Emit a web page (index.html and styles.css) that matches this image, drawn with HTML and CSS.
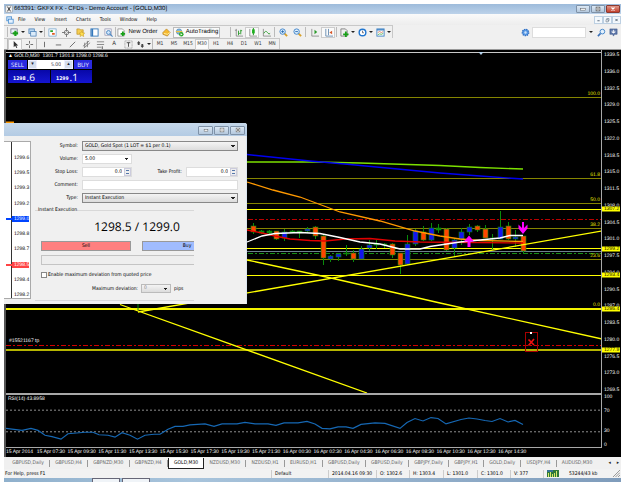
FILE: index.html
```
<!DOCTYPE html>
<html lang="en">
<head>
<meta charset="utf-8">
<title>663391: GKFX FX - CFDs - Demo Account - [GOLD,M30]</title>
<link rel="stylesheet" href="styles.css">
</head>
<body>
<div class="app">
  <header class="title">
    <svg class="ic" viewBox="0 0 10 10"><rect x="1" y="1" width="8" height="8" fill="#f4f4f4" stroke="#888" stroke-width=".6"/><path d="M3 2l4 6M7 2L3 8" stroke="#333" stroke-width="1.2"/></svg>
    <span class="grow">663391: GKFX FX - CFDs - Demo Account - [GOLD,M30]</span>
    <button class="win" aria-label="Minimize"><svg viewBox="0 0 10 8"><rect x="2" y="3.5" width="6" height="2" fill="#fff" stroke="#555" stroke-width=".6"/></svg></button>
    <button class="win" aria-label="Maximize"><svg viewBox="0 0 10 8"><rect x="2.5" y="1.5" width="5" height="5" fill="#fff" stroke="#555"/><rect x="4" y="3" width="2" height="2" fill="#777"/></svg></button>
    <button class="win close" aria-label="Close"><svg viewBox="0 0 10 8"><path d="M3 2l4 4M7 2L3 6" stroke="#fff" stroke-width="1.5"/></svg></button>
  </header>
  <nav class="menu">
    <svg class="ic" viewBox="0 0 10 10"><rect x="1" y="1" width="6" height="5" fill="#cde4fa" stroke="#4b8fd0"/><rect x="3" y="4" width="6" height="5" fill="#e5f2ff" stroke="#4b8fd0"/></svg>
    <a href="#">File</a><a href="#">View</a><a href="#">Insert</a><a href="#">Charts</a><a href="#">Tools</a><a href="#">Window</a><a href="#">Help</a>
    <span class="grow"></span>
    <button class="mdi" aria-label="Minimize chart"><svg viewBox="0 0 8 8"><path d="M2.500 5h3" stroke="#345" stroke-width="1"/></svg></button>
    <button class="mdi" aria-label="Restore chart"><svg viewBox="0 0 8 8"><path d="M3 3V2h3v3H5M2 3.500h3v3H2z" fill="none" stroke="#567" stroke-width=".7"/></svg></button>
    <button class="mdi" aria-label="Close chart"><svg viewBox="0 0 8 8"><path d="M2.500 2.500l3 3M5.500 2.500l-3 3" stroke="#345" stroke-width="1"/></svg></button>
  </nav>
  <div class="bar one">
    <div class="tools">
      <i class="grip"></i>
      <button class="dd" aria-label="New chart"><svg viewBox="0 0 10 10"><rect x="1" y="1" width="7" height="5" fill="#e8f0f5" stroke="#557" stroke-width=".7"/><path d="M6 3v6M3 6h6" stroke="#18a018" stroke-width="2.400"/></svg></button>
      <button class="dd" aria-label="Profiles"><svg viewBox="0 0 10 10"><rect x="1" y="1" width="6" height="5" fill="#b8d6f0" stroke="#4179b0" stroke-width=".8"/><rect x="3" y="4" width="6" height="5" fill="#dcecfa" stroke="#4179b0" stroke-width=".8"/></svg></button>
      <i class="sep"></i>
      <button aria-label="Market watch"><svg viewBox="0 0 10 10"><rect x="1" y="1" width="8" height="8" fill="#fff" stroke="#6aa0cc" stroke-width=".8"/><path d="M2.500 3.500h3" stroke="#2aa52a" stroke-width="2"/><path d="M4.500 6.500h3" stroke="#e05a20" stroke-width="2"/></svg></button>
      <button aria-label="Data window"><svg viewBox="0 0 10 10"><circle cx="5" cy="5" r="2.500" fill="none" stroke="#777"/><path d="M5 0v4M5 6v4M0 5h4M6 5h4" stroke="#666" stroke-width=".9"/></svg></button>
      <button aria-label="Navigator"><svg viewBox="0 0 10 10"><path d="M1 1h3l1 1h3v5H1z" fill="#f5cd52" stroke="#b98c1c" stroke-width=".7"/><path d="M6.500 3.500l1 2 2.200.2-1.600 1.500.5 2.300-2.100-1.200-2 1.200.5-2.300L3.500 5.700l2-.2z" fill="#ffdf50" stroke="#c79a20" stroke-width=".6"/></svg></button>
      <button aria-label="Terminal"><svg viewBox="0 0 10 10"><rect x="1" y="1" width="8" height="8" fill="#fff" stroke="#3478bb"/><path d="M2.500 1v8" stroke="#3478bb" stroke-width="2"/></svg></button>
      <button aria-label="Strategy tester"><svg viewBox="0 0 10 10"><rect x="1" y="1" width="7" height="7" fill="#f7f7f7" stroke="#88a" stroke-width=".7"/><circle cx="5" cy="5" r="2.200" fill="#cde4fa" stroke="#4a86c0"/><path d="M6.500 6.500L9.500 9.500" stroke="#4a86c0" stroke-width="1.200"/></svg></button>
      <i class="sep"></i>
      <button class="wide order"><svg viewBox="0 0 10 10"><path d="M1 1h5l2 2v6H1z" fill="#fff" stroke="#777" stroke-width=".7"/><path d="M6.500 4v5M4 6.500h5" stroke="#18a018" stroke-width="2"/></svg>New Order</button>
      <button aria-label="MetaEditor"><svg viewBox="0 0 10 10"><path d="M1 5l4-4 4 4-3 4-5-2z" fill="#f6b92e" stroke="#b07714" stroke-width=".7"/><path d="M2 6l4 1 3-2" fill="none" stroke="#fff0a8"/></svg></button>
      <button class="wide auto"><svg viewBox="0 0 10 10"><circle cx="4.500" cy="4" r="3" fill="#7dbbe8" stroke="#2d6ca8" stroke-width=".6"/><path d="M1 4h7" stroke="#f0c040" stroke-width="1.500"/><circle cx="7" cy="7" r="2.500" fill="#28a828"/><path d="M6.200 5.700l2.200 1.300-2.200 1.300z" fill="#fff"/></svg>AutoTrading</button>
      <i class="grip far"></i>
      <button aria-label="Bar chart"><svg viewBox="0 0 10 10"><path d="M2.500 1v8H10M1 2.500h2" fill="none" stroke="#777" stroke-width=".8"/><path d="M5 3v5M7.500 2v5M5 6h1.500M7.500 3H9" stroke="#2a9a2a"/></svg></button>
      <button class="on" aria-label="Candlesticks"><svg viewBox="0 0 10 10"><path d="M2 1v8H10" fill="none" stroke="#777" stroke-width=".8"/><path d="M6 0v8" stroke="#178a17"/><rect x="4.500" y="1.500" width="3" height="4.500" fill="#1fb01f"/></svg></button>
      <button aria-label="Line chart"><svg viewBox="0 0 10 10"><path d="M1.500 1v8H10" fill="none" stroke="#777" stroke-width=".8"/><path d="M2 6q2-4 4-1t3 1" fill="none" stroke="#2a9a2a"/></svg></button>
      <i class="sep"></i>
      <button aria-label="Zoom in"><svg viewBox="0 0 10 10"><path d="M6 6l3 3" stroke="#d8a028" stroke-width="2"/><circle cx="4" cy="4" r="3" fill="#dceefc" stroke="#3a80c8"/><path d="M2.500 4h3M4 2.500v3" stroke="#2468b0"/></svg></button>
      <button aria-label="Zoom out"><svg viewBox="0 0 10 10"><path d="M6 6l3 3" stroke="#d8a028" stroke-width="2"/><circle cx="4" cy="4" r="3" fill="#dceefc" stroke="#3a80c8"/><path d="M2.500 4h3" stroke="#2468b0"/></svg></button>
      <i class="sep"></i>
      <button aria-label="Auto scroll"><svg viewBox="0 0 10 10"><path d="M2 1v8H10" fill="none" stroke="#777" stroke-width=".8"/><path d="M5 2v5l3-2.500z" fill="#2a9a2a"/></svg></button>
      <button class="on" aria-label="Chart shift"><svg viewBox="0 0 10 10"><path d="M2 1v8H10M5 1v7" fill="none" stroke="#5580a8" stroke-width=".9"/><path d="M9 3v4L6 5z" fill="#d8572a"/></svg></button>
      <i class="sep"></i>
      <button class="dd" aria-label="Indicators"><svg viewBox="0 0 10 10"><path d="M1 1h5l2 2v6H1z" fill="#eee" stroke="#666" stroke-width=".8"/><path d="M6.500 4v6M3.500 7h6" stroke="#18a018" stroke-width="2"/></svg></button>
      <button class="dd" aria-label="Periods"><svg viewBox="0 0 10 10"><circle cx="5" cy="5" r="3.700" fill="#fff" stroke="#2277d0" stroke-width="1.600"/><path d="M5 3v2.300h1.600" fill="none" stroke="#445" stroke-width=".8"/></svg></button>
      <button class="dd" aria-label="Templates"><svg viewBox="0 0 10 10"><rect x="1" y="1" width="8" height="8" fill="#fff" stroke="#3e82c4"/><path d="M1 2h8" stroke="#3e82c4" stroke-width="1.500"/><path d="M2 5l2-1 2 1 2-1" fill="none" stroke="#d06040" stroke-width=".8"/><path d="M2 7.500l2-1 2 .5 2-1" fill="none" stroke="#30a030" stroke-width=".8"/></svg></button>
    </div>
    <span class="grow"></span>
    <div class="search">
      <button aria-label="Options"><svg viewBox="0 0 10 10"><circle cx="5" cy="5" r="3.500" fill="#5a9be6" stroke="#2f6cc0" stroke-dasharray="1.400 1" stroke-width="1.600"/><circle cx="5" cy="5" r="1.300" fill="#cfe3fa"/></svg></button>
      <input type="text" aria-label="Search"><span class="caret"></span>
      <button aria-label="Find"><svg viewBox="0 0 10 10"><path d="M4 6L1 9" stroke="#3a70b8" stroke-width="1.800"/><circle cx="6" cy="4" r="2.600" fill="#e4f1fd" stroke="#3a80c8"/></svg></button>
      <button aria-label="Chat"><svg viewBox="0 0 10 10"><path d="M1 1h8v6H6L5 9 4 7H1z" fill="#5b75a8" stroke="#3c5588" stroke-width=".6"/><path d="M5 2v4M3.500 3v2h3V3" fill="none" stroke="#fff" stroke-width=".9"/></svg></button>
    </div>
  </div>
  <div class="bar two">
    <div class="tools">
      <i class="grip"></i>
      <button class="on" aria-label="Cursor"><svg viewBox="0 0 10 10"><path d="M3 1v7l1.700-1.600L6 9l1-.5-1.200-2.400H8z" fill="#333"/></svg></button>
      <button aria-label="Crosshair"><svg viewBox="0 0 10 10"><path d="M5 1v3M5 6v3M1 5h3M6 5h3" stroke="#555" stroke-width=".9"/></svg></button>
      <i class="sep"></i>
      <button aria-label="Vertical line"><svg viewBox="0 0 10 10"><path d="M5 2v6" stroke="#555" stroke-width=".9"/></svg></button>
      <button aria-label="Horizontal line"><svg viewBox="0 0 10 10"><path d="M2 5.500h6" stroke="#555" stroke-width=".9"/></svg></button>
      <button aria-label="Trend line"><svg viewBox="0 0 10 10"><path d="M2 8l6-6" stroke="#555" stroke-width=".9"/></svg></button>
      <button aria-label="Channel"><svg viewBox="0 0 10 10"><path d="M1 7l7-6M2 9l7-6M3 3v5M6 1v7" stroke="#666" stroke-width=".8"/></svg></button>
      <button aria-label="Fibonacci"><svg viewBox="0 0 10 10"><path d="M1 2h8M1 5h8M1 8h5" stroke="#777" stroke-width=".9"/><path d="M7 7v3" stroke="#555"/></svg></button>
      <button class="letter">A</button>
      <button aria-label="Text label"><svg viewBox="0 0 10 10"><rect x="1" y="1" width="8" height="8" fill="none" stroke="#888" stroke-dasharray="1 .6" stroke-width=".8"/><path d="M3 3h4M5 3v4.500" stroke="#444"/></svg></button>
      <button class="dd" aria-label="Arrows"><svg viewBox="0 0 10 10"><path d="M3 1l2 2.500H4v2H2v-2H1zM7 9L5 6.500h1v-2h2v2h1z" fill="#444"/></svg></button>
      <i class="sep"></i>
      <button>M1</button><button>M5</button><button>M15</button><button class="on">M30</button><button>H1</button><button>H4</button><button>D1</button><button>W1</button><button>MN</button>
    </div>
  </div>

  <main class="chart">
    <section class="plot">
      <svg class="fill" viewBox="6 50 595 343" preserveAspectRatio="none">
        <g class="flat">
          <path d="M6 52.500H602" stroke="#c8c8c8"/>
          <path d="M6 97.500H602M6 178.500H602M6 203.500H602M6 228.500H602M6 259.500H602" stroke="#858500"/>
          <path d="M6 219.500H602" stroke="#b80000" stroke-dasharray="5 2 2 2"/>
          <path d="M6 253.500H602" stroke="#169016" stroke-dasharray="5 2 2 2"/>
          <path d="M6 251.500H602" stroke="#708090"/>
          <path d="M6 209.500H602M6 248.500H602M6 275.500H602" stroke="#ff0"/>
          <path d="M6 309H602" stroke="#f2f200" stroke-width="2"/>
          <path d="M6 345.500H602" stroke="#d00000" stroke-dasharray="5 2 2 2"/>
          <path d="M6 350H602" stroke="#b5b500" stroke-width="2"/>
        </g>
        <path d="M5 122.500h9" stroke="#f90" stroke-width="2"/>
        <g id="candles"></g>
        <g fill="none">
          <path d="M120 304.500L367 393M138 312L602 231M247 260L331 278L440 303L602 339" stroke="#ff0" stroke-width="1.300"/>
          <path d="M138 304v6" stroke="#0a8a0a"/>
          <path d="M247 162H315L360 163L440 165.500L480 167.500L523 169" stroke="#7ce000" stroke-width="1.300"/>
          <path d="M247 154.500L310 161L350 164.500L440 173L480 176L523 179" stroke="#0000f0" stroke-width="1.400"/>
          <path d="M247 182L273 190L300 197L340 212L380 221L415 231L440 236L460 239L480 240.500L523 241.500" stroke="#f90" stroke-width="1.300"/>
          <path d="M247 230L262 233L275 236L290 239L310 240.500L325 241L345 239L370 238.500L395 241L420 242L523 243" stroke="#e00000" stroke-width="1.300"/>
          <path d="M247 242L262 236L275 233.500L300 232.500L320 233.500L340 237.500L360 242L380 244L400 249L420 249L430 246.500L440 245L460 242L480 240L500 238L510 235.500L523 235.500" stroke="#fff" stroke-width="1.300"/>
        </g>
        <g fill="#f0f">
          <path d="M469 235.500l5 6h-3.500v5.500h-3v-5.500H464z"/>
          <path d="M522 222h2v6l3.500-3.500v4L523 234l-4.500-5.500v-4L522 228z"/>
        </g>
        <rect x="525.500" y="332.500" width="12" height="19" fill="none" stroke="#a80000"/>
        <path d="M528.500 339.500l5.500 5.500M534 339l-5.500 6.500" stroke="#f01010" stroke-width="1.700"/>
        <rect x="530" y="332" width="2" height="2" fill="#fff"/>
        <path d="M478.500 52h5l-2.500 3z" fill="#b8d4ee"/>
      </svg>
      <p class="quote-line">▲ GOLD,M30&nbsp; 1301.7 1301.8 1298.0 1298.6</p>
      <div class="trade">
        <button class="side">SELL</button>
        <div class="vol"><button aria-label="Less">▾</button><input type="text" value="5.00" aria-label="Trade volume"><button aria-label="More">▴</button></div>
        <button class="side">BUY</button>
        <div class="px"><b>1298</b><span>.6</span></div>
        <div class="px"><b>1299</b><span>.1</span></div>
      </div>
      <span class="fib" style="top:13.7%">100.0</span><span class="fib" style="top:37.3%">61.8</span><span class="fib" style="top:44.6%">50.0</span><span class="fib" style="top:51.9%">38.2</span><span class="fib" style="top:60.9%">23.6</span><span class="fib" style="top:75.3%">0.0</span>
      <span class="tp">#15521167 tp</span>
    </section>
    <aside class="prices">
      <span>1339.5</span><span>1336.0</span><span>1332.5</span><span>1329.0</span><span>1325.5</span><span>1322.0</span><span>1318.5</span><span>1315.0</span><span>1311.5</span><span>1308.0</span><span>1304.5</span><span>1301.0</span><span>1297.5</span><span>1294.0</span><span>1290.5</span><span>1287.0</span><span>1283.5</span><span>1280.0</span><span>1276.5</span><span>1273.0</span><span>1269.5</span>
      <b class="tag" style="top:46.4%">1307.2</b><b class="tag" style="top:57.9%">1299.2</b><b class="tag" style="top:65.7%">1293.4</b><b class="tag" style="top:75.5%">1286.4</b><b class="tag" style="top:87.4%">1277.9</b>
    </aside>
    <section class="rsi">
      <svg class="fill" viewBox="6 393 595 55" preserveAspectRatio="none">
        <g class="flat" fill="none"><path d="M6 394H602" stroke="#a8a8a8" stroke-width="2"/><path d="M6 410.500H602M6 432.500H602" stroke="#909090" stroke-dasharray="2 2"/></g>
        <path fill="none" stroke="#1668b4" stroke-width="1.200" d="M6 429L14 430L22 431L31 429L38 431L45 436L52 437.500L61 440L68 434.500L85 433L93 433L99 435.500L108 436L115 438L122 433.500L130 436L137.500 440L145 436L154 435L160 435L168 430L175 427L183 427L190 425.500L205 424.500L214 427L222 424.500L237 424.500L245 423L255 424.500L268 424.500L276 426L284 423.500L298 423.500L307 422L315 424.500L322 429L330 429.500L338 427.500L346 427.500L353 429L361 425L375 423.500L385 424L400 429L407 423L415 419L423 421.500L431 418L438 419L446 424.500L461 420L469 418.500L477 419.500L485 421L492 422L500 419L508 422.500L515 421L523 425"/>
      </svg>
      <p>RSI(14) 43.8958</p>
    </section>
    <aside class="levels"><span>100</span><span>70</span><span>30</span><span>0</span></aside>
    <footer class="times"><div><span>15 Apr 2014</span><span>15 Apr 07:30</span><span>15 Apr 09:30</span><span>15 Apr 11:30</span><span>15 Apr 13:30</span><span>15 Apr 15:30</span><span>15 Apr 17:30</span><span>15 Apr 19:30</span><span>15 Apr 21:30</span><span>16 Apr 00:30</span><span>16 Apr 02:30</span><span>16 Apr 04:30</span><span>16 Apr 06:30</span><span>16 Apr 08:30</span><span>16 Apr 10:30</span><span>16 Apr 12:30</span><span>16 Apr 14:30</span></div></footer>
  </main>

  <nav class="tabs">
    <a href="#">GBPUSD,Daily</a><a href="#">GBPUSD,H4</a><a href="#">GBPNZD,M30</a><a href="#">GBPNZD,H4</a><a href="#" class="active">GOLD,M30</a><a href="#">NZDUSD,M30</a><a href="#">NZDUSD,H1</a><a href="#">EURUSD,H1</a><a href="#">GBPUSD,Daily</a><a href="#">GBPUSD,Daily</a><a href="#">GBPJPY,Daily</a><a href="#">GBPJPY,H1</a><a href="#">GOLD,Daily</a><a href="#">USDJPY,H4</a><a href="#">AUDUSD,M30</a><span class="scroll"><button aria-label="Scroll left">◂</button><button aria-label="Scroll right">▸</button></span>
  </nav>
  <footer class="status">
    <span>For Help, press F1</span><span>Default</span><span>2014.04.16 09:30</span><span>O: 1302.6</span><span>H: 1303.4</span><span>L: 1301.0</span><span>C: 1301.0</span><span>V: 377</span>
    <span class="net"><svg viewBox="0 0 12 7"><rect width="12" height="7" fill="#2f7838"/><path d="M1.500 7V3M3.500 7V2M5.500 7V4M7.500 7V3M9.500 7V1" stroke="#d8e86a"/><path d="M0 1h6" stroke="#3a70b0" stroke-width="1.500"/></svg>53244/43 kb</span>
    <svg class="resize" viewBox="0 0 7 7"><path d="M0 7L7 0M2.500 7L7 2.500M5 7l2-2" stroke="#999"/></svg>
  </footer>
  <div class="taskbar"><i class="orb"></i><i class="task"></i><i class="task"></i></div>
</div>

<form class="dialog">
  <header><button type="button" class="win" aria-label="Minimize order"><svg viewBox="0 0 10 8"><rect x="2.500" y="3.500" width="5" height="2" fill="#fff" stroke="#555" stroke-width=".6"/></svg></button><button type="button" class="win" aria-label="Maximize order"><svg viewBox="0 0 10 8"><rect x="2.500" y="1.500" width="5" height="5" fill="#fff" stroke="#666" stroke-width=".8"/><path d="M4 4h2" stroke="#666"/></svg></button><button type="button" class="win" aria-label="Close order"><svg viewBox="0 0 10 8"><rect x="2.500" y="1.500" width="5" height="5" fill="#fff" stroke="#777" stroke-width=".8"/><path d="M3 2l4 4M7 2L3 6" stroke="#666"/></svg></button></header>
  <div class="order-body">
    <div class="tick">
      <span>1299.6</span><span>1299.5</span><span>1299.3</span><span>1299.2</span><span class="ask">1299.0</span><span>1298.8</span><span>1298.7</span><span class="bid">1298.5</span><span>1298.4</span><span>1298.2</span>
    </div>
    <div class="fields">
      <div class="grid">
        <label for="sym">Symbol:</label><select id="sym" class="span"><option>GOLD, Gold Spot (1 LOT = $1 per 0.1)</option></select>
        <label for="vol">Volume:</label><select id="vol" class="plain"><option>5.00</option></select>
        <label for="sl" class="row3">Stop Loss:</label><span class="spin"><input id="sl" value="0.0"><i></i></span><label for="pr">Take Profit:</label><span class="spin"><input id="pr" value="0.0"><i></i></span>
        <label for="com">Comment:</label><input id="com" class="span">
        <label for="typ">Type:</label><select id="typ" class="span"><option>Instant Execution</option></select>
      </div>
      <fieldset>
        <legend>Instant Execution</legend>
        <div class="quote">1298.5 / 1299.0</div>
        <div class="acts"><button type="button" class="sell">Sell</button><button type="button" class="buy">Buy</button></div>
        <div class="progress"></div>
        <label class="check"><input type="checkbox">Enable maximum deviation from quoted price</label>
        <div class="dev"><label for="dev">Maximum deviation:</label><select id="dev" disabled><option>0</option></select><span>pips</span></div>
      </fieldset>
    </div>
  </div>
</form>
<script src="chart.js"></script>
</body>
</html>
```
FILE: styles.css
```
* { box-sizing: border-box; }
body { margin: 0; background: #fff; font: 5px/8px "DejaVu Sans Condensed", "Open Sans", sans-serif; color: #000; text-rendering: geometricPrecision; }
p { margin: 0; }
a { color: inherit; text-decoration: none; }
button, input, select { font: inherit; color: inherit; margin: 0; padding: 0; border: 0; border-radius: 0; background: none; appearance: none; min-width: 0; text-rendering: inherit; }
svg { display: block; }
.grow { flex: 1; }
.app { min-height: 100vh; padding: 4px 4px 0; display: flex; flex-direction: column; }
.ic { width: 8px; height: 8px; flex: none; }

.title { height: 10px; display: flex; align-items: center; gap: 1px; padding: 0 1px; background: linear-gradient(#9dbbdb, #bcd2ea); font: 6px/8px "Liberation Sans", sans-serif; }
.win { width: 14px; height: 8px; border: 1px solid #7f92a8; border-radius: 1px; background: linear-gradient(#dce8f4, #b4c8dd); display: flex; justify-content: center; align-items: center; }
.win svg { width: 8px; height: 6px; }
.win.close { background: linear-gradient(#e0988a, #c4402c); border-color: #8b3a30; }

.menu { height: 11px; display: flex; align-items: center; background: linear-gradient(#fafafa, #ededed); padding-left: 2px; }
.menu a { margin-left: 9px; }
.menu a:first-of-type { margin-left: 4px; }
.mdi { width: 9px; height: 8px; border: 1px solid #bdd0e2; background: #f4f9fd; }
.mdi svg { width: 7px; height: 6px; }

.bar { display: flex; background: #f0f0f0; align-items: stretch; }
.one { height: 13px; }
.two { height: 12px; border-bottom: 1px solid #999; }
.tools { display: flex; align-items: center; border: solid #c8c8c8; border-width: 1px 1px 0 0; }
.tools button { width: 14px; height: 11px; display: flex; align-items: center; justify-content: center; gap: 2px; color: #333; flex: none; }
.tools button svg { width: 9px; height: 9px; flex: none; }
.tools .dd { width: 18px; }
.dd::after, .caret { content: ""; border: solid transparent; border-width: 2px 2px 0; border-top-color: #222; width: 0; height: 0; }
.tools .on { background: #fafafa; border: 1px solid #ccc; }
.tools .wide { color: #000; font: 6px/8px "Liberation Sans", sans-serif; white-space: nowrap; }
.tools .order { width: 43px; }
.tools .auto { width: 47px; background: #fafafa; border: 1px solid #bbb; }
.tools .letter { font-size: 6px; }
.sep, .grip { width: 1px; height: 10px; background: #bbb; flex: none; }
.grip { margin: 0 0 0 3px; }
.grip.far { margin-left: 10px; }
.far ~ .sep { margin: 0 1px; }
.two .tools .dd { width: 17px; }
.search { display: flex; align-items: center; gap: 1px; padding: 1px 2px 0 0; }
.search button { width: 11px; height: 11px; display: grid; place-items: center; }
.search button svg { width: 9px; height: 9px; }
.search input { width: 54px; height: 11px; background: #fff; border: 1px solid #ddd; }
.search .caret { margin: 0 2px; }

.chart { flex: 1; min-height: 0; display: grid; grid-template-columns: minmax(0, 1fr) 19px; grid-template-rows: minmax(0, 343fr) minmax(0, 55fr) 9px; background: #000; color: #fff; border-left: 2px solid #555; font-family: "Liberation Sans", sans-serif; line-height: 6px; }
.plot, .rsi { position: relative; min-height: 0; border-right: 1px solid #a8a8a8; }
.fill { position: absolute; inset: 0; width: 100%; height: 100%; }
.flat { shape-rendering: crispEdges; }
.quote-line { position: relative; padding: 3px 0 0 2px; }
.trade { position: relative; width: 84px; margin: 1px 0 0 2px; display: grid; grid-template-columns: 19px 22px 22px 18px; column-gap: 1px; row-gap: 1px; color: #fff; }
.side { background: #2a2ae0; color: #eef; height: 9px; font: 6px/8px "Open Sans", sans-serif; }
.vol { grid-column: 2 / 4; display: flex; background: #fff; color: #223; height: 9px; }
.vol input { width: 0; flex: 1; text-align: right; padding-right: 3px; font: 5px/8px "Open Sans", sans-serif; }
.vol button { width: 9px; background: #d4dcec; border: 1px solid #eef; line-height: 5px; }
.px { grid-column: span 2; background: linear-gradient(#0808a8, #1515d0); height: 13px; padding-left: 5px; display: flex; align-items: center; gap: 1px; }
.px b { font: bold 5px/6px "DejaVu Sans Condensed", sans-serif; padding-top: 4px; }
.px span { font: 10px/12px "Open Sans", sans-serif; }
.fib { position: absolute; right: 1px; transform: translateY(-100%); color: #e8e800; line-height: 5px; }
.tp { position: absolute; left: 3px; top: 84%; }
.prices { position: relative; display: flex; flex-direction: column; justify-content: space-between; padding: 2px 0 0 2px; min-height: 0; }
.tag { position: absolute; left: 0; width: 18px; padding-left: 2px; transform: translateY(-50%); background: #ff0; color: #000; font-weight: normal; line-height: 5px; }
.rsi p { position: relative; padding: 3px 0 0 2px; }
.rsi { border-bottom: 1px solid #a8a8a8; }
.levels { display: grid; grid-template-rows: 14fr 21fr 14fr 6px; padding: 1px 0 0 2px; min-height: 0; }
.times { grid-column: 1 / -1; }
.times div { width: 85%; display: grid; grid-template-columns: repeat(17, 1fr); line-height: 8px; white-space: nowrap; }

.tabs { height: 12px; display: flex; align-items: center; background: #f0f0f0; color: #666; padding-left: 3px; }
.tabs a { flex: auto; text-align: center; border-right: 1px solid #999; line-height: 7px; white-space: nowrap; }
.tabs .active { background: #fff; color: #000; border: 1px solid #222; border-top: 0; line-height: 10px; }
.tabs a:nth-child(15) { border: 0; }
.scroll { display: flex; color: #222; gap: 6px; padding: 0 2px 0 11px; }

.status { height: 9px; display: grid; grid-template-columns: minmax(0, 1fr) 57px 48px 33px 34px 34px 33px 33px 70px 8px; background: #f2f2f2; align-items: center; white-space: nowrap; }
.status span { border-left: 1px solid #ccc; padding-left: 3px; }
.status span:first-child { border: 0; padding-left: 1px; }
.status .net { display: flex; align-items: center; gap: 10px; }
.net svg { width: 12px; height: 7px; }
.resize { width: 7px; height: 7px; }
.taskbar { height: 4px; background: linear-gradient(90deg, #8fb0cc, #a8c4dc 30%, #7f9cbb); display: flex; gap: 2px; }
.orb { width: 86px; }
.task { width: 28px; background: #f0f4f8; border: 1px solid #667; border-bottom: 0; }

.dialog { position: absolute; left: 4px; top: 123px; width: 243px; background: #f0f0f0; border-radius: 0 3px 0 0; box-shadow: inset -1px 1px 0 #dce6f0; }
.dialog header { height: 13px; padding: 1px 2px 0 0; display: flex; justify-content: flex-end; align-items: center; gap: 1px; background: linear-gradient(#c6d8ea, #b3cbe4); border-radius: 0 3px 0 0; }
.dialog header .win { width: 15px; height: 9px; }
.order-body { display: flex; height: 168px; }
.tick { width: 27px; margin: 5px 0; padding: 13px 1px 0 0; display: flex; flex-direction: column; justify-content: space-between; background: linear-gradient(90deg, transparent 7px, #333 7px, #333 8px, transparent 8px), #fff; border: 1px solid #aaa; border-left: 0; font: 5px/6px "Liberation Sans", sans-serif; }
.tick span { margin-left: 8px; padding-left: 2px; }
.tick .ask { background: #04f; color: #fff; box-shadow: -8px 0 0 -2px #04f; }
.tick .bid { background: #f44; color: #fff; box-shadow: -8px 0 0 -2px #f44; }
.fields { flex: 1; min-width: 0; padding: 5px 9px 0 4px; }
.grid { display: grid; grid-template-columns: 47px 50px 54px minmax(0, 1fr); grid-auto-rows: 10px; row-gap: 3px; }
.grid label { text-align: right; padding-right: 4px; line-height: 10px; white-space: nowrap; }
.grid .span { grid-column: 2 / -1; }
.grid label[for="vol"], .grid .row3 { grid-column: 1; }
input, select { background: #fff; }
.grid input, .grid select { width: 100%; height: 10px; border: 1px solid #ddd; padding: 0 2px; line-height: 8px; }
.grid select, .dev select { border: 1px solid #888; background-image: linear-gradient(to top right, transparent 50%, #222 50%), linear-gradient(to top left, transparent 50%, #222 50%), linear-gradient(#f4f4f4, #dcdcdc); background-size: 2px 2px, 2px 2px, 100% 100%; background-position: right 4px center, right 2px center, 0 0; background-repeat: no-repeat; }
.grid .plain { background-image: linear-gradient(to top right, transparent 50%, #222 50%), linear-gradient(to top left, transparent 50%, #222 50%), linear-gradient(#fff, #fff); border-color: #ddd; }
.grid .spin { display: flex; background: #fff; border: 1px solid #ddd; height: 10px; }
.grid .spin input { flex: 1; height: 8px; border: 0; text-align: right; }
.spin i { width: 7px; flex: none; border: 1px solid #ccd; background: linear-gradient(#eee 1px, #57a 1px, #57a 2px, #eee 2px, #eee 4px, #57a 4px, #57a 5px, #eee 5px) center / 3px 6px no-repeat #eee; }
fieldset { margin: 4px 0 0; padding: 0 0 0 6px; border: 1px solid #d8d8d8; border-width: 1px 0; width: 159px; min-width: 0; height: 94px; overflow: hidden; }
legend { padding: 0; margin-left: -3px; line-height: 7px; }
.quote { font: 12px/16px "Open Sans", sans-serif; text-align: center; margin-top: 5px; width: 192px; color: #000; }
.acts { display: flex; gap: 11px; margin-top: 6px; }
.acts button { width: 90px; height: 10px; flex: none; border: 1px solid #999; line-height: 8px; }
.sell { background: #ff8080; }
.buy { background: #a0bcff; }
.progress { height: 10px; margin-top: 4px; border: 1px solid #c4c4c4; border-right: 0; background: #eee; }
.check { display: flex; align-items: center; gap: 1px; margin-top: 6px; white-space: nowrap; }
.check input { width: 6px; height: 6px; border: 1px solid #888; }
.dev { display: flex; align-items: center; margin-top: 5px; padding-left: 51px; gap: 3px; white-space: nowrap; }
.dev select { width: 30px; height: 9px; padding-left: 2px; border-color: #bbb; color: #888; line-height: 7px; opacity: 1; }
```
FILE: chart.js
```
// Candles: centre x, high, low, body top, body bottom, colour (r falling, b rising, g doji)
const candles = [
  [253,223,234,226,232,'r'],[261,230,234,231,233,'g'],[269,230,234,231,233,'g'],[276,231,240,231,239,'r'],
  [284,229,241,232,238,'b'],[292,230,233,231,232,'g'],[299,231,238,231,232,'g'],[307,227,233,229,231,'b'],
  [315,226,239,227,236,'r'],[323,235,265,236,258,'r'],[330,255,262,256,259,'b'],[338,253,261,254,257,'b'],
  [346,245,256,253,254,'g'],[353,250,262,253,259,'r'],[361,246,259,249,259,'b'],[369,240,251,245,248,'b'],
  [376,240,249,244,245,'g'],[384,243,248,244,245,'g'],[392,243,258,244,255,'r'],[400,253,274,253,265,'r'],
  [407,235,265,244,264,'b'],[415,229,246,231,244,'b'],[423,226,241,232,240,'r'],[431,223,241,228,240,'b'],
  [438,224,233,228,230,'g'],[446,228,251,229,250,'r'],[454,239,257,240,248,'b'],[461,228,245,232,239,'b'],
  [469,224,235,227,232,'b'],[477,225,232,226,230,'r'],[485,225,238,229,238,'r'],[492,234,250,238,239,'g'],
  [500,211,239,227,239,'b'],[508,222,240,226,239,'r'],[515,230,247,237,239,'b'],[523,236,254,236,251,'r']
];
const fill = { r: '#ff4500', b: '#1414ee', g: '#0a8a0a' };
document.getElementById('candles').innerHTML = candles.map(([x, h, l, t, b, c]) =>
  `<path d="M${x + 0.5} ${h}V${l}" stroke="#0a8a0a"/><rect x="${x - 2}" y="${t}" width="5" height="${b - t}" fill="${fill[c]}" stroke="#0a8a0a" stroke-width=".6"/>`
).join('');
```
